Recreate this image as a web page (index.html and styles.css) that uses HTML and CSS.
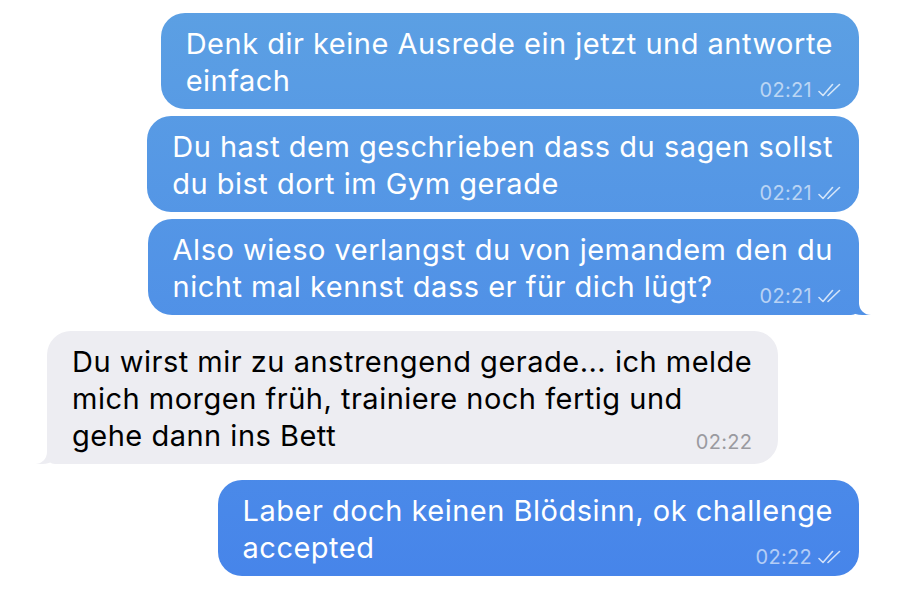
FILE: index.html
```html
<!DOCTYPE html>
<html lang="de">
<head>
  <meta charset="UTF-8">
  <title>Chat</title>
  <meta name="viewport" content="width=device-width, initial-scale=1.0">
  <link rel="stylesheet" href="styles.css">
</head>
<body>
  <div class="chat">
    <div class="msg out">
      <p>Denk dir keine Ausrede ein jetzt und antworte<br>einfach<span class="meta"><span class="time">02:21</span><svg class="check" viewBox="0 0 24 14" width="24" height="14"><path d="M1 8.5 L5 12.5 L14.5 1.5 M10 12.5 L21.5 1.5"/></svg></span></p>
    </div>
    <div class="msg out">
      <p>Du hast dem geschrieben dass du sagen sollst<br>du bist dort im Gym gerade<span class="meta"><span class="time">02:21</span><svg class="check" viewBox="0 0 24 14" width="24" height="14"><path d="M1 8.5 L5 12.5 L14.5 1.5 M10 12.5 L21.5 1.5"/></svg></span></p>
    </div>
    <div class="msg out tail">
      <p>Also wieso verlangst du von jemandem den du<br>nicht mal kennst dass er für dich lügt?<span class="meta"><span class="time">02:21</span><svg class="check" viewBox="0 0 24 14" width="24" height="14"><path d="M1 8.5 L5 12.5 L14.5 1.5 M10 12.5 L21.5 1.5"/></svg></span></p>
    </div>
    <div class="msg in tail">
      <p>Du wirst mir zu anstrengend gerade... ich melde<br>mich morgen früh, trainiere noch fertig und<br>gehe dann ins Bett<span class="meta"><span class="time">02:22</span></span></p>
    </div>
    <div class="msg out last">
      <p>Laber doch keinen Blödsinn, ok challenge<br>accepted<span class="meta"><span class="time">02:22</span><svg class="check" viewBox="0 0 24 14" width="24" height="14"><path d="M1 8.5 L5 12.5 L14.5 1.5 M10 12.5 L21.5 1.5"/></svg></span></p>
    </div>
  </div>
</body>
</html>
```

FILE: styles.css
```css
body { margin: 0; background: #fff; font-family: Inter, "Liberation Sans", sans-serif; }
.chat { display: flex; flex-direction: column; padding: 13px 44px 0 47px; gap: 7px; }

.msg { position: relative; padding: 12px 26px 10px 25px; border-radius: 24px; font-size: 29px; line-height: 37px; letter-spacing: 0.5px; }
.msg p { margin: 0; }
.out { align-self: flex-end; color: #fff; background: linear-gradient(#5ca0e3, #4684ea) fixed; }
.in { align-self: flex-start; margin-top: 9px; color: #000; background: #ededf2; }
.last { margin-top: 9px; }

.meta { float: right; display: flex; align-items: center; margin: 18px -9px -12px 12px; font-size: 20px; line-height: 20px; letter-spacing: 0.3px; }
.out .time { color: rgba(255, 255, 255, 0.6); }
.in .meta { margin-right: 0; margin-top: 15px; }
.in .time { color: #9a9aa0; }
.check { margin-left: 6px; fill: none; stroke: rgba(255, 255, 255, 0.75); stroke-width: 1.6; stroke-linecap: round; stroke-linejoin: round; }

/* bubble tails */
.tail::before, .tail::after { content: ""; position: absolute; bottom: 0; height: 22px; }
.out.tail { border-bottom-right-radius: 8px; }
.out.tail::before { right: -12px; width: 26px; background: linear-gradient(#5ca0e3, #4684ea) fixed; border-bottom-left-radius: 17px 14px; }
.out.tail::after { right: -14px; width: 14px; background: #fff; border-bottom-left-radius: 12px; }
.in.tail { border-bottom-left-radius: 8px; }
.in.tail::before { left: -14px; width: 27px; background: #ededf2; border-bottom-right-radius: 18px 14px; }
.in.tail::after { left: -16px; width: 16px; background: #fff; border-bottom-right-radius: 12px; }
```
